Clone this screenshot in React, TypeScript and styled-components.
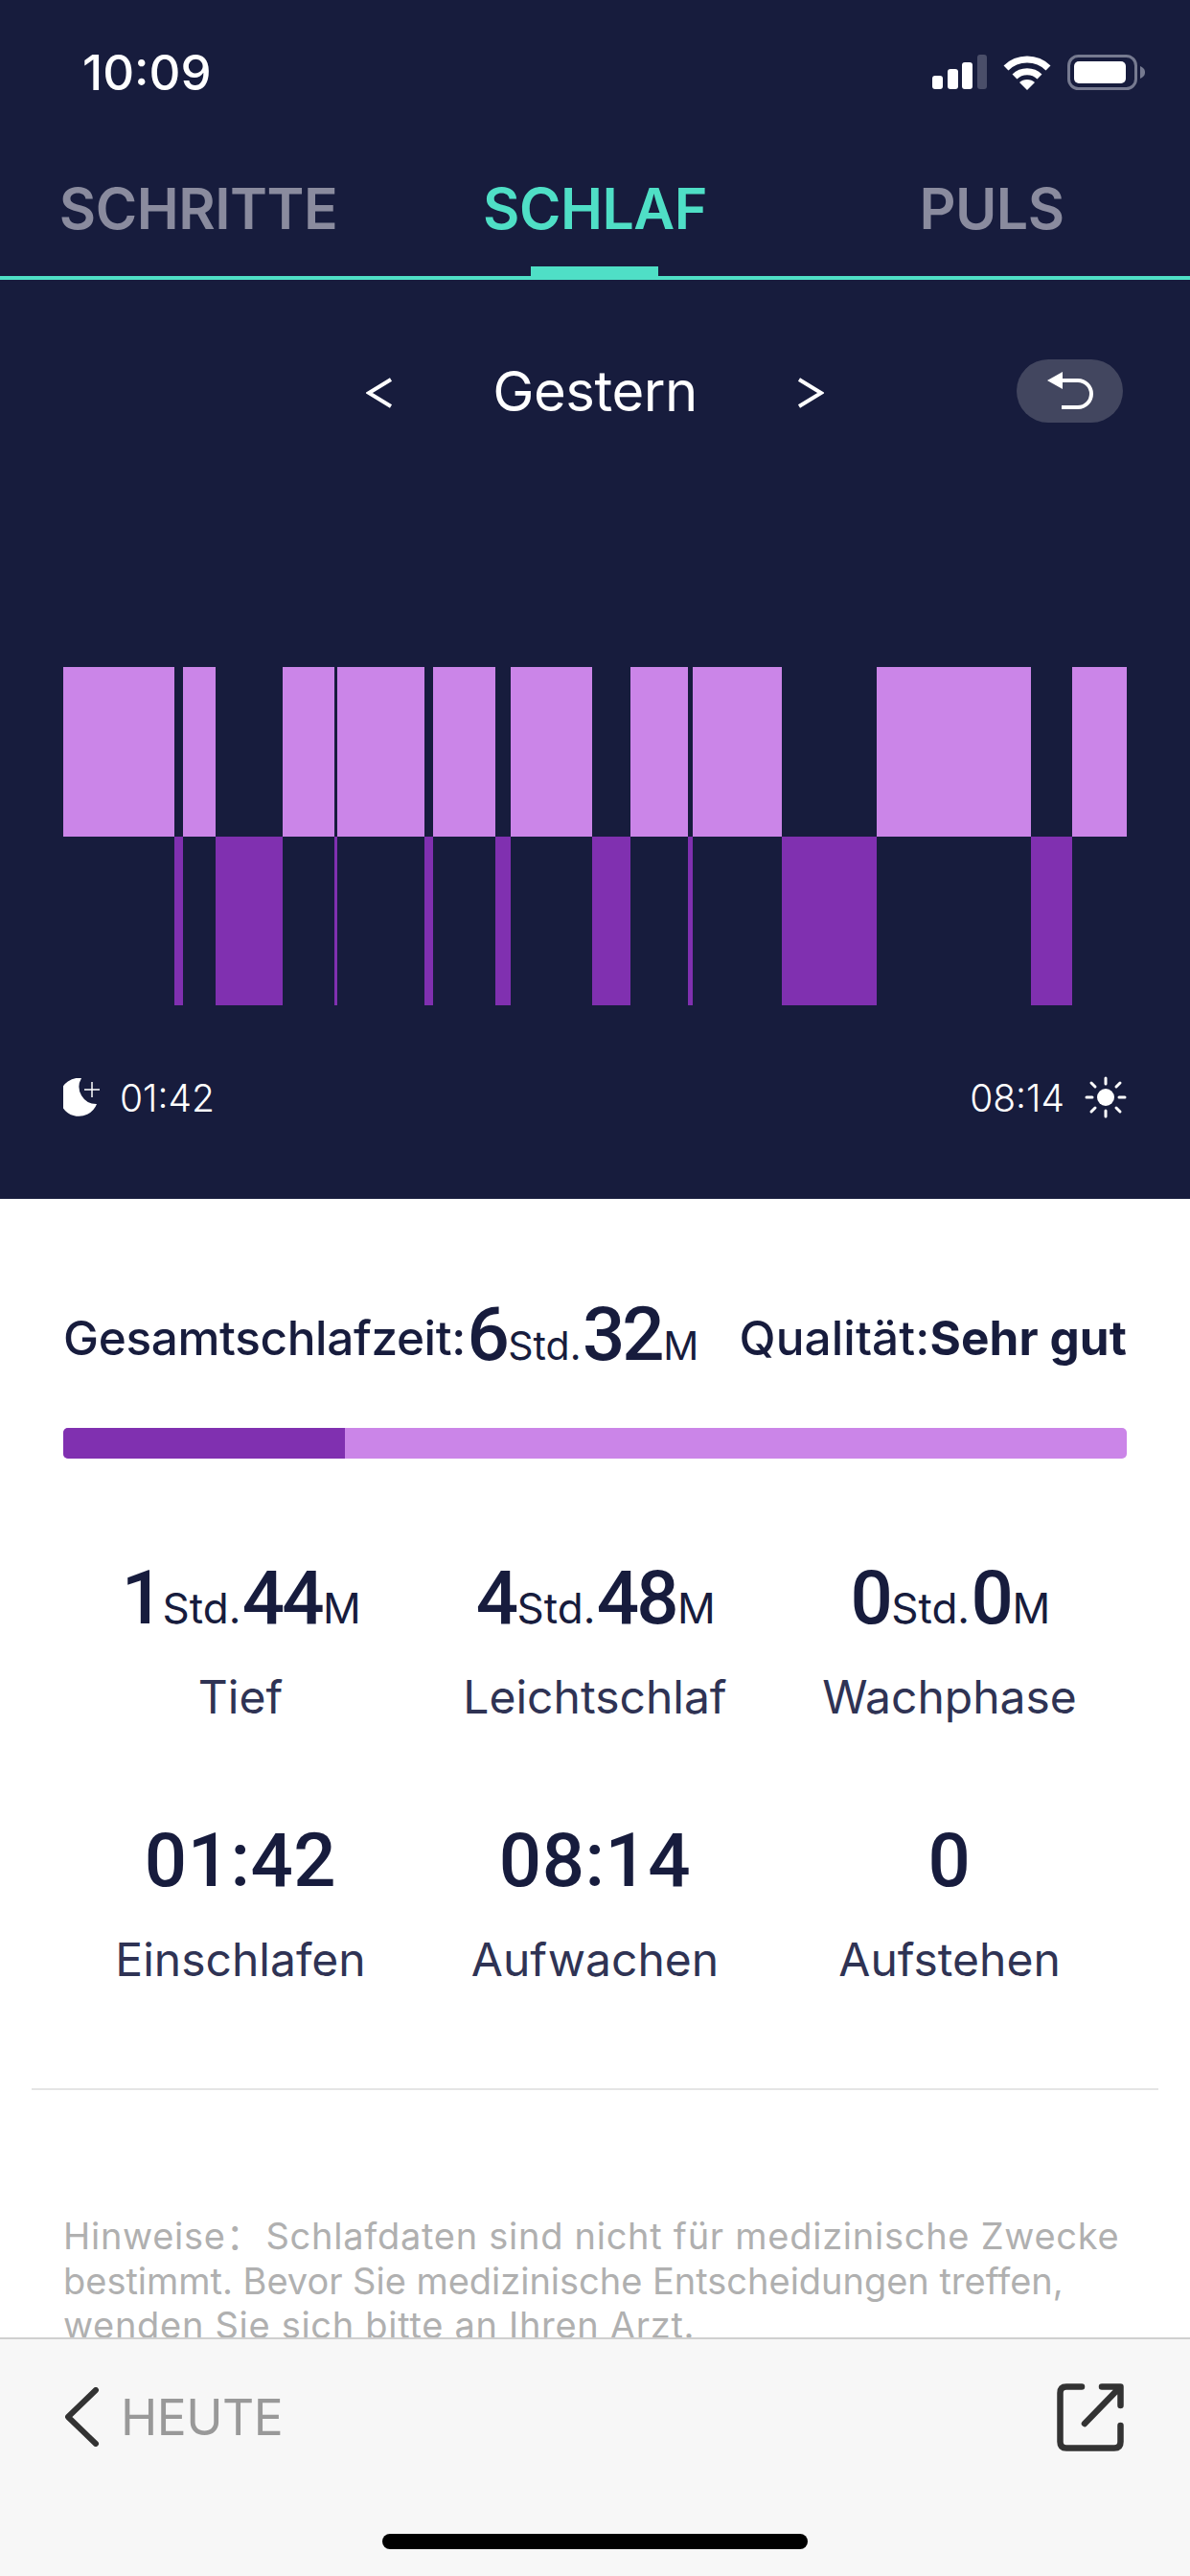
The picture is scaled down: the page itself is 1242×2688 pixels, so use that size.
import React from "react";
import styled, { createGlobalStyle } from "styled-components";

const NAVY = "#171c3d";
const TEAL = "#4fdfc6";
const LIGHT = "#cb85e8";
const DEEP = "#8030b0";

type Segment = { width: number; deep?: boolean };

// sleep phases, widths in px at the chart's 1110px width
const segments: Segment[] = [
  { width: 116 },
  { width: 9, deep: true },
  { width: 34 },
  { width: 70, deep: true },
  { width: 54 },
  { width: 3, deep: true },
  { width: 91 },
  { width: 9, deep: true },
  { width: 65 },
  { width: 16, deep: true },
  { width: 85 },
  { width: 40, deep: true },
  { width: 60 },
  { width: 5, deep: true },
  { width: 93 },
  { width: 99, deep: true },
  { width: 161 },
  { width: 43, deep: true },
  { width: 57 },
];

const stats = [
  { hours: "1", minutes: "44", label: "Tief" },
  { hours: "4", minutes: "48", label: "Leichtschlaf" },
  { hours: "0", minutes: "0", label: "Wachphase" },
];

const times = [
  { value: "01:42", label: "Einschlafen" },
  { value: "08:14", label: "Aufwachen" },
  { value: "0", label: "Aufstehen" },
];

const App: React.FC = () => (
  <>
    <GlobalStyle />
    <Screen>
      <Content>
        <DarkPanel>
          <StatusBar>
            <Clock>10:09</Clock>
            <StatusIcons>
              <SignalIcon />
              <WifiIcon />
              <BatteryIcon />
            </StatusIcons>
          </StatusBar>
          <Tabs>
            <Tab>SCHRITTE</Tab>
            <Tab $active>SCHLAF</Tab>
            <Tab>PULS</Tab>
          </Tabs>
          <DateNav>
            <span />
            <DateGroup>
              <Arrow viewBox="0 0 28 32">
                <path d="M26 2 L3 16 L26 30" />
              </Arrow>
              <DateLabel>Gestern</DateLabel>
              <Arrow viewBox="0 0 28 32">
                <path d="M2 2 L25 16 L2 30" />
              </Arrow>
            </DateGroup>
            <BackPill>
              <UndoIcon />
            </BackPill>
          </DateNav>
          <Chart>
            {segments.map((segment, i) => (
              <Bar key={i} $width={segment.width} $deep={segment.deep} />
            ))}
          </Chart>
          <TimeRow>
            <TimeItem>
              <MoonIcon />
              01:42
            </TimeItem>
            <TimeItem>
              08:14
              <SunIcon />
            </TimeItem>
          </TimeRow>
        </DarkPanel>

        <Summary>
          <SummaryRow>
            <div>
              <SummaryText>Gesamtschlafzeit:</SummaryText>
              <BigNumber>6</BigNumber>
              <Unit>Std.</Unit>
              <BigNumber>32</BigNumber>
              <Unit>M</Unit>
            </div>
            <QualityText>
              Qualität:<strong>Sehr gut</strong>
            </QualityText>
          </SummaryRow>
          <Progress>
            <ProgressFill />
          </Progress>
          <StatGrid>
            {stats.map((stat) => (
              <Stat key={stat.label}>
                <StatValue>
                  <BigNumber>{stat.hours}</BigNumber>
                  <Unit>Std.</Unit>
                  <BigNumber>{stat.minutes}</BigNumber>
                  <Unit>M</Unit>
                </StatValue>
                <StatLabel>{stat.label}</StatLabel>
              </Stat>
            ))}
            {times.map((time) => (
              <Stat key={time.label}>
                <StatValue>
                  <TimeNumber>{time.value}</TimeNumber>
                </StatValue>
                <StatLabel>{time.label}</StatLabel>
              </Stat>
            ))}
          </StatGrid>
        </Summary>
        <Divider />
        <Note>
          <NoteLine $spacing={0.73}>
            Hinweise<WideColon>：</WideColon>Schlafdaten sind nicht für medizinische Zwecke
          </NoteLine>
          <NoteLine $spacing={-0.02}>
            bestimmt. Bevor Sie medizinische Entscheidungen treffen,
          </NoteLine>
          <NoteLine $spacing={0.7}>wenden Sie sich bitte an Ihren Arzt.</NoteLine>
        </Note>
      </Content>

      <Footer>
        <FooterRow>
          <BackLink>
            <ChevronIcon />
            HEUTE
          </BackLink>
          <ShareIcon />
        </FooterRow>
        <HomeBar />
      </Footer>
    </Screen>
  </>
);

const SignalIcon = () => (
  <svg width="57" height="36" viewBox="0 0 57 36">
    <rect x="0" y="22" width="11" height="14" rx="3" fill="#fff" />
    <rect x="16" y="15" width="11" height="21" rx="3" fill="#fff" />
    <rect x="31" y="8" width="11" height="28" rx="3" fill="#fff" />
    <rect x="47" y="0" width="10" height="36" rx="3" fill="#4a4e69" />
  </svg>
);

const WifiIcon = () => (
  <svg width="50" height="37" viewBox="0 0 50 37" fill="none" stroke="#fff" strokeWidth="7">
    <path d="M3 14 C15 2 35 2 47 14" />
    <path d="M12 23 C19 16 31 16 38 23" />
    <path d="M25 37 L17 29 C21 25 29 25 33 29 Z" fill="#fff" stroke="none" />
  </svg>
);

const BatteryIcon = () => (
  <svg width="81" height="37" viewBox="0 0 81 37">
    <rect x="1.5" y="1.5" width="70" height="34" rx="10" fill="none" stroke="#767a90" strokeWidth="3" />
    <rect x="7" y="7" width="54" height="23" rx="5" fill="#fff" />
    <path d="M76 12 C80 14 81 16 81 18.5 C81 21 80 23 76 25 Z" fill="#767a90" />
  </svg>
);

const UndoIcon = () => (
  <svg width="50" height="44" viewBox="0 0 50 44" fill="none">
    <path d="M1 11 L17 2 V20 Z" fill="#fff" />
    <path d="M15 11 H33 A14 14 0 0 1 33 39 H16" stroke="#fff" strokeWidth="4" />
  </svg>
);

const MoonIcon = () => (
  <svg width="38" height="40" viewBox="0 0 38 40">
    <path d="M19 0 A20 20 0 1 0 35 27 A18 18 0 0 1 19 0 Z" fill="#fff" />
    <path d="M30 4 V20 M22 12 H38" stroke="#fff" strokeWidth="1.5" />
  </svg>
);

const SunIcon = () => (
  <svg width="44" height="44" viewBox="0 0 44 44" stroke="#fff" strokeWidth="3" strokeLinecap="round">
    <circle cx="22" cy="22" r="9" fill="#fff" stroke="none" />
    <path d="M22 2 V8 M22 36 V42 M2 22 H8 M36 22 H42 M7 7 L11 11 M33 33 L37 37 M7 37 L11 33 M33 11 L37 7" />
  </svg>
);

const ChevronIcon = () => (
  <svg width="36" height="62" viewBox="0 0 36 62" fill="none" stroke="#333" strokeWidth="6" strokeLinecap="round" strokeLinejoin="round">
    <path d="M32 3 L3 31 L32 59" />
  </svg>
);

const ShareIcon = () => (
  <svg width="70" height="71" viewBox="0 0 70 71" fill="none" stroke="#333" strokeWidth="6.5" strokeLinecap="round" strokeLinejoin="round">
    <path d="M26 3.5 H10 Q3.5 3.5 3.5 10 V61 Q3.5 67.5 10 67.5 H60 Q66.5 67.5 66.5 61 V44" />
    <path d="M29 42 L65 5 M47 3.5 H66.5 V23" />
  </svg>
);

const GlobalStyle = createGlobalStyle`
  html, body {
    margin: 0;
    padding: 0;
    background: #fff;
  }
  body {
    font-family: Inter, "Noto Sans", sans-serif;
  }
`;

const Screen = styled.div`
  width: 1242px;
  height: 2688px;
  display: flex;
  flex-direction: column;
  overflow: hidden;
  background: #fff;
`;

const Content = styled.main`
  flex: 1;
  min-height: 0;
  overflow: hidden;
`;

const DarkPanel = styled.section`
  background: ${NAVY};
  height: 1251px;
  color: #fff;
`;

const StatusBar = styled.div`
  height: 150px;
  padding: 0 47px 0 86px;
  display: flex;
  align-items: center;
  justify-content: space-between;
`;

const Clock = styled.span`
  font-size: 51px;
  font-weight: 500;
`;

const StatusIcons = styled.div`
  display: flex;
  align-items: center;
  gap: 17px;
`;

const Tabs = styled.nav`
  height: 138px;
  display: grid;
  grid-template-columns: repeat(3, 1fr);
  border-bottom: 4px solid ${TEAL};
`;

const Tab = styled.div<{ $active?: boolean }>`
  position: relative;
  display: flex;
  align-items: center;
  justify-content: center;
  padding-bottom: 4px;
  font-size: 59px;
  font-weight: 600;
  letter-spacing: -0.5px;
  color: ${({ $active }) => ($active ? TEAL : "#8a8b9e")};

  &::after {
    content: "";
    display: ${({ $active }) => ($active ? "block" : "none")};
    position: absolute;
    left: 50%;
    bottom: 0;
    width: 133px;
    height: 10px;
    margin-left: -67px;
    background: ${TEAL};
  }
`;

const DateNav = styled.div`
  margin-top: 81px;
  padding: 0 70px;
  height: 66px;
  display: grid;
  grid-template-columns: 1fr auto 1fr;
  align-items: center;
`;

const DateGroup = styled.div`
  display: flex;
  align-items: center;
  gap: 104px;
`;

const DateLabel = styled.span`
  font-size: 58px;
  font-weight: 400;
  letter-spacing: -0.5px;
`;

const Arrow = styled.svg`
  width: 28px;
  height: 32px;
  margin-top: 4px;
  fill: none;
  stroke: #fff;
  stroke-width: 4;
`;

const BackPill = styled.div`
  justify-self: end;
  width: 111px;
  height: 66px;
  border-radius: 33px;
  background: #42465f;
  display: flex;
  align-items: center;
  justify-content: center;
`;

const Chart = styled.div`
  margin: 257px 66px 0;
  height: 353px;
  display: flex;
`;

const Bar = styled.div<{ $width: number; $deep?: boolean }>`
  flex: 0 0 ${({ $width }) => $width}px;
  height: 50%;
  align-self: ${({ $deep }) => ($deep ? "flex-end" : "flex-start")};
  background: ${({ $deep }) => ($deep ? DEEP : LIGHT)};
`;

const TimeRow = styled.div`
  margin: 72px 66px 0;
  height: 48px;
  display: flex;
  align-items: center;
  justify-content: space-between;
`;

const TimeItem = styled.div`
  display: flex;
  align-items: center;
  gap: 21px;
  font-size: 39px;
  font-weight: 300;
`;

const Summary = styled.section`
  padding: 0 66px;
  color: ${NAVY};
`;

const SummaryRow = styled.div`
  height: 239px;
  display: flex;
  align-items: baseline;
  justify-content: space-between;
  padding-top: 96px;
  box-sizing: border-box;
`;

const SummaryText = styled.span`
  position: relative;
  top: -5px;
  font-size: 49.5px;
  font-weight: 500;
  letter-spacing: -0.35px;

  strong {
    font-weight: 700;
  }
`;

const QualityText = styled(SummaryText)`
  letter-spacing: 0.1px;
`;

const BigNumber = styled.span`
  font-family: Roboto, sans-serif;
  font-size: 78px;
  font-weight: 500;
  letter-spacing: -3px;
  margin: 0 1.5px;
`;

const TimeNumber = styled(BigNumber)`
  letter-spacing: 0.5px;
`;

const Unit = styled.span`
  font-size: 41px;
  font-weight: 400;
`;

const Progress = styled.div`
  height: 32px;
  border-radius: 5px;
  overflow: hidden;
  background: ${LIGHT};
`;

const ProgressFill = styled.div`
  width: 26.5%;
  height: 100%;
  background: ${DEEP};
`;

const StatGrid = styled.div`
  display: grid;
  grid-template-columns: repeat(3, 1fr);
  row-gap: 97px;
  margin-top: 100px;
`;

const Stat = styled.div`
  display: flex;
  flex-direction: column;
  align-items: center;
`;

const StatValue = styled.div`
  height: 92px;
  line-height: 92px;
  white-space: nowrap;

  ${Unit} {
    font-size: 44px;
  }
`;

const StatLabel = styled.div`
  margin-top: 29px;
  font-size: 48px;
  line-height: 56px;
  color: #2f3354;
`;

const Divider = styled.hr`
  margin: 106px 33px 0;
  height: 2px;
  border: 0;
  background: #e5e5e5;
`;

const Note = styled.div`
  margin: 127px 66px 0;
  font-size: 38px;
  line-height: 46.5px;
  color: #b0b0b0;
`;

const NoteLine = styled.p<{ $spacing: number }>`
  margin: 0;
  white-space: nowrap;
  letter-spacing: ${({ $spacing }) => $spacing}px;
`;

const WideColon = styled.span`
  font-family: "Noto Sans CJK SC", sans-serif;
  margin-right: 3px;
`;

const Footer = styled.footer`
  height: 249px;
  box-sizing: border-box;
  flex: none;
  border-top: 2px solid #d0d0d0;
  background: #f7f7f7;
  display: flex;
  flex-direction: column;
  align-items: center;
`;

const FooterRow = styled.div`
  align-self: stretch;
  height: 74px;
  margin: 44px 69px 0 68px;
  display: flex;
  align-items: center;
  justify-content: space-between;
`;

const BackLink = styled.div`
  display: flex;
  align-items: center;
  gap: 22px;
  font-size: 51.5px;
  font-weight: 400;
  letter-spacing: -0.5px;
  color: #999;
`;

const HomeBar = styled.div`
  margin-top: 85px;
  width: 444px;
  height: 16px;
  border-radius: 8px;
  background: #000;
`;

export default App;
